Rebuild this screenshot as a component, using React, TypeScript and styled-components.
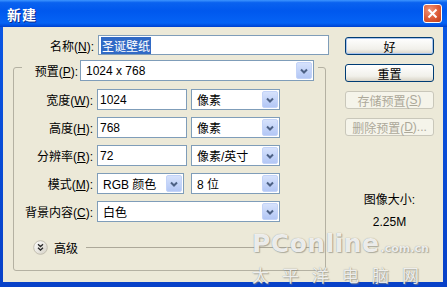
import { FC, ReactNode } from 'react';
import styled, { createGlobalStyle } from 'styled-components';

const GlobalStyle = createGlobalStyle`
  html, body {
    margin: 0;
    padding: 0;
    background: #ffffff;
  }
  body {
    font-family: 'Liberation Sans', 'Noto Sans CJK SC', sans-serif;
    font-size: 12px;
    color: #000000;
  }
`;

const Window = styled.div`
  position: relative;
  width: 447px;
  height: 287px;
  display: flex;
  flex-direction: column;
  background: linear-gradient(to bottom, #0a58e6, #0841c8);
  overflow: hidden;
`;

const TitleBar = styled.div`
  height: 27px;
  flex-shrink: 0;
  display: flex;
  align-items: center;
  justify-content: space-between;
  padding: 0 5px 0 7px;
  background: linear-gradient(
    to bottom,
    #3d95ff 0%,
    #0a62ef 10%,
    #0058ee 40%,
    #0563f5 85%,
    #0050e0 94%,
    #003fcc 100%
  );
`;

const Title = styled.span`
  color: #ffffff;
  font-weight: 700;
  font-size: 14px;
  font-family: 'Noto Sans CJK SC', sans-serif;
  text-shadow: 1px 1px 0 #0c2a8c;
  letter-spacing: 1px;
`;

const CloseButton = styled.div`
  width: 19px;
  height: 19px;
  box-sizing: border-box;
  border: 1px solid #ffffff;
  border-radius: 3px;
  background: radial-gradient(circle at 35% 30%, #f0957a, #dc5a36 55%, #bf3e1c);
  display: flex;
  align-items: center;
  justify-content: center;
`;

const Body = styled.div`
  flex: 1;
  margin: 0 4px 5px 3px;
  background: #ece9d8;
  display: flex;
  padding: 8px 0 0 10px;
`;

const LeftCol = styled.div`
  width: 316px;
  display: flex;
  flex-direction: column;
`;

const RightCol = styled.div`
  width: 89px;
  margin-left: 16px;
  padding-top: 2px;
  display: flex;
  flex-direction: column;
`;

const Row = styled.div<{ $h?: number }>`
  display: flex;
  align-items: center;
  gap: 4px;
  height: ${(p) => p.$h ?? 21}px;
`;

const Label = styled.label<{ $w: number }>`
  width: ${(p) => p.$w}px;
  flex-shrink: 0;
  text-align: right;
  white-space: nowrap;
`;

const Key = styled.span`
  text-decoration: underline;
`;

const TextField = styled.div<{ $w: number; $h?: number }>`
  width: ${(p) => p.$w}px;
  height: ${(p) => p.$h ?? 21}px;
  box-sizing: border-box;
  border: 1px solid #7f9db9;
  background: #ffffff;
  display: flex;
  align-items: center;
  padding-left: 2px;
  white-space: nowrap;
`;

const Selected = styled.span`
  background: #316ac5;
  color: #ffffff;
  padding: 0 1px;
`;

const ComboBox = styled.div<{ $w: number; $ml?: number }>`
  width: ${(p) => p.$w}px;
  height: 21px;
  margin-left: ${(p) => p.$ml ?? 0}px;
  box-sizing: border-box;
  border: 1px solid #7f9db9;
  background: #ffffff;
  display: flex;
  align-items: center;
  padding: 0 1px 0 5px;
`;

const ComboText = styled.span`
  flex: 1;
  white-space: nowrap;
`;

const DropButton = styled.span`
  width: 16px;
  height: 17px;
  box-sizing: border-box;
  border: 1px solid #c3d3f8;
  border-radius: 2px;
  background: linear-gradient(to bottom, #d6e2fc, #b3c7f5);
  display: flex;
  align-items: center;
  justify-content: center;
`;

const GroupBox = styled.div`
  width: 313px;
  margin-top: 12px;
  box-sizing: border-box;
  border: 1px solid #b4b1a2;
  border-radius: 3px;
  padding-bottom: 15px;
  display: flex;
  flex-direction: column;
`;

const GroupHeader = styled.div`
  display: flex;
  align-items: center;
  gap: 2px;
  height: 21px;
  margin: -8px 7px 0 8px;
  padding-right: 4px;
  background: #ece9d8;
`;

const Fields = styled.div`
  display: flex;
  flex-direction: column;
  gap: 7px;
  padding-top: 8px;
`;

const Advanced = styled.div`
  display: flex;
  align-items: center;
  height: 16px;
  margin-top: 17px;
  padding-left: 19px;
  gap: 6px;
`;

const Rule = styled.div`
  flex: 1;
  height: 1px;
  margin: 0 5px 0 2px;
  background: #aca899;
`;

const ButtonStack = styled.div`
  display: flex;
  flex-direction: column;
  gap: 9px;
`;

const Button = styled.div<{ $default?: boolean; $disabled?: boolean }>`
  height: 18px;
  box-sizing: border-box;
  border: 1px solid ${(p) => (p.$disabled ? '#c9c7ba' : '#003c74')};
  border-radius: 3px;
  background: ${(p) =>
    p.$disabled
      ? '#f5f4ea'
      : 'linear-gradient(to bottom, #ffffff, #f1f0ea 70%, #d8d3c6)'};
  box-shadow: ${(p) => (p.$default ? 'inset 0 0 0 1px #a9c4ee' : 'none')};
  color: ${(p) => (p.$disabled ? '#aca899' : '#000000')};
  display: flex;
  align-items: center;
  justify-content: center;
  white-space: nowrap;
`;

const SizeInfo = styled.div`
  margin-top: 56px;
  display: flex;
  flex-direction: column;
  align-items: center;
  gap: 6px;
  line-height: 16px;
`;

const Watermark = styled.div`
  position: absolute;
  left: 252px;
  top: 228px;
  width: 184px;
  pointer-events: none;
  color: rgba(255, 255, 255, 0.85);
  text-shadow: 0 0 1px rgba(120, 120, 110, 0.8), 1px 1px 1px rgba(140, 140, 130, 0.6);
`;

const WmBrand = styled.div`
  display: flex;
  align-items: baseline;
  font-family: 'DejaVu Sans', sans-serif;
  font-weight: 700;
  line-height: 32px;
  white-space: nowrap;
`;

const WmBig = styled.span`
  font-size: 25px;
  letter-spacing: 0.5px;
`;

const WmSmall = styled.span`
  font-size: 11px;
  margin-left: 1px;
`;

const WmCn = styled.div`
  font-family: 'Noto Sans CJK SC', sans-serif;
  font-size: 17px;
  line-height: 20px;
  letter-spacing: 13px;
  white-space: nowrap;
`;

const Chevron = () => (
  <svg width="10" height="10" viewBox="0 0 10 10">
    <path d="M2 3.5 L5 6.5 L8 3.5" fill="none" stroke="#4d6185" strokeWidth="2" />
  </svg>
);

const Combo: FC<{ w: number; ml?: number; children?: ReactNode }> = ({ w, ml, children }) => (
  <ComboBox $w={w} $ml={ml}>
    <ComboText>{children}</ComboText>
    <DropButton>
      <Chevron />
    </DropButton>
  </ComboBox>
);

const AdvancedIcon = () => (
  <svg width="15" height="15" viewBox="0 0 15 15">
    <defs>
      <linearGradient id="adv" x1="0" y1="0" x2="1" y2="1">
        <stop offset="0" stopColor="#ffffff" />
        <stop offset="1" stopColor="#d4d0c4" />
      </linearGradient>
    </defs>
    <circle cx="7.5" cy="7.5" r="6.8" fill="url(#adv)" stroke="#c2beb0" />
    <path d="M5 4.2 L7.5 6.5 L10 4.2 M5 7.7 L7.5 10 L10 7.7" fill="none" stroke="#2a2a2a" strokeWidth="1.3" />
  </svg>
);

const App: FC = () => (
  <>
    <GlobalStyle />
    <Window>
      <TitleBar>
        <Title>新建</Title>
        <CloseButton>
          <svg width="11" height="11" viewBox="0 0 11 11">
            <path d="M1.5 1.5 L9.5 9.5 M9.5 1.5 L1.5 9.5" stroke="#ffffff" strokeWidth="2" />
          </svg>
        </CloseButton>
      </TitleBar>
      <Body>
        <LeftCol>
          <Row $h={20}>
            <Label $w={81}>
              名称(<Key>N</Key>):
            </Label>
            <TextField $w={232} $h={20}>
              <Selected>圣诞壁纸</Selected>
            </TextField>
          </Row>
          <GroupBox>
            <GroupHeader>
              <Label $w={56}>
                预置(<Key>P</Key>):
              </Label>
              <Combo w={234}>1024 x 768</Combo>
            </GroupHeader>
            <Fields>
              <Row>
                <Label $w={79}>
                  宽度(<Key>W</Key>):
                </Label>
                <TextField $w={90}>1024</TextField>
                <Combo w={89}>像素</Combo>
              </Row>
              <Row>
                <Label $w={79}>
                  高度(<Key>H</Key>):
                </Label>
                <TextField $w={90}>768</TextField>
                <Combo w={89}>像素</Combo>
              </Row>
              <Row>
                <Label $w={79}>
                  分辨率(<Key>R</Key>):
                </Label>
                <TextField $w={90}>72</TextField>
                <Combo w={89}>像素/英寸</Combo>
              </Row>
              <Row>
                <Label $w={79}>
                  模式(<Key>M</Key>):
                </Label>
                <Combo w={87}>RGB 颜色</Combo>
                <Combo w={89} ml={3}>
                  8 位
                </Combo>
              </Row>
              <Row>
                <Label $w={79}>
                  背景内容(<Key>C</Key>):
                </Label>
                <Combo w={183}>白色</Combo>
              </Row>
            </Fields>
            <Advanced>
              <AdvancedIcon />
              <span>高级</span>
              <Rule />
            </Advanced>
          </GroupBox>
        </LeftCol>
        <RightCol>
          <ButtonStack>
            <Button $default>好</Button>
            <Button>重置</Button>
            <Button $disabled>
              存储预置(<Key>S</Key>)
            </Button>
            <Button $disabled>
              删除预置(<Key>D</Key>)...
            </Button>
          </ButtonStack>
          <SizeInfo>
            <span>图像大小:</span>
            <span>2.25M</span>
          </SizeInfo>
        </RightCol>
      </Body>
      <Watermark>
        <WmBrand>
          <WmBig>PConline</WmBig>
          <WmSmall>.com.cn</WmSmall>
        </WmBrand>
        <WmCn>太平洋电脑网</WmCn>
      </Watermark>
    </Window>
  </>
);

export default App;
